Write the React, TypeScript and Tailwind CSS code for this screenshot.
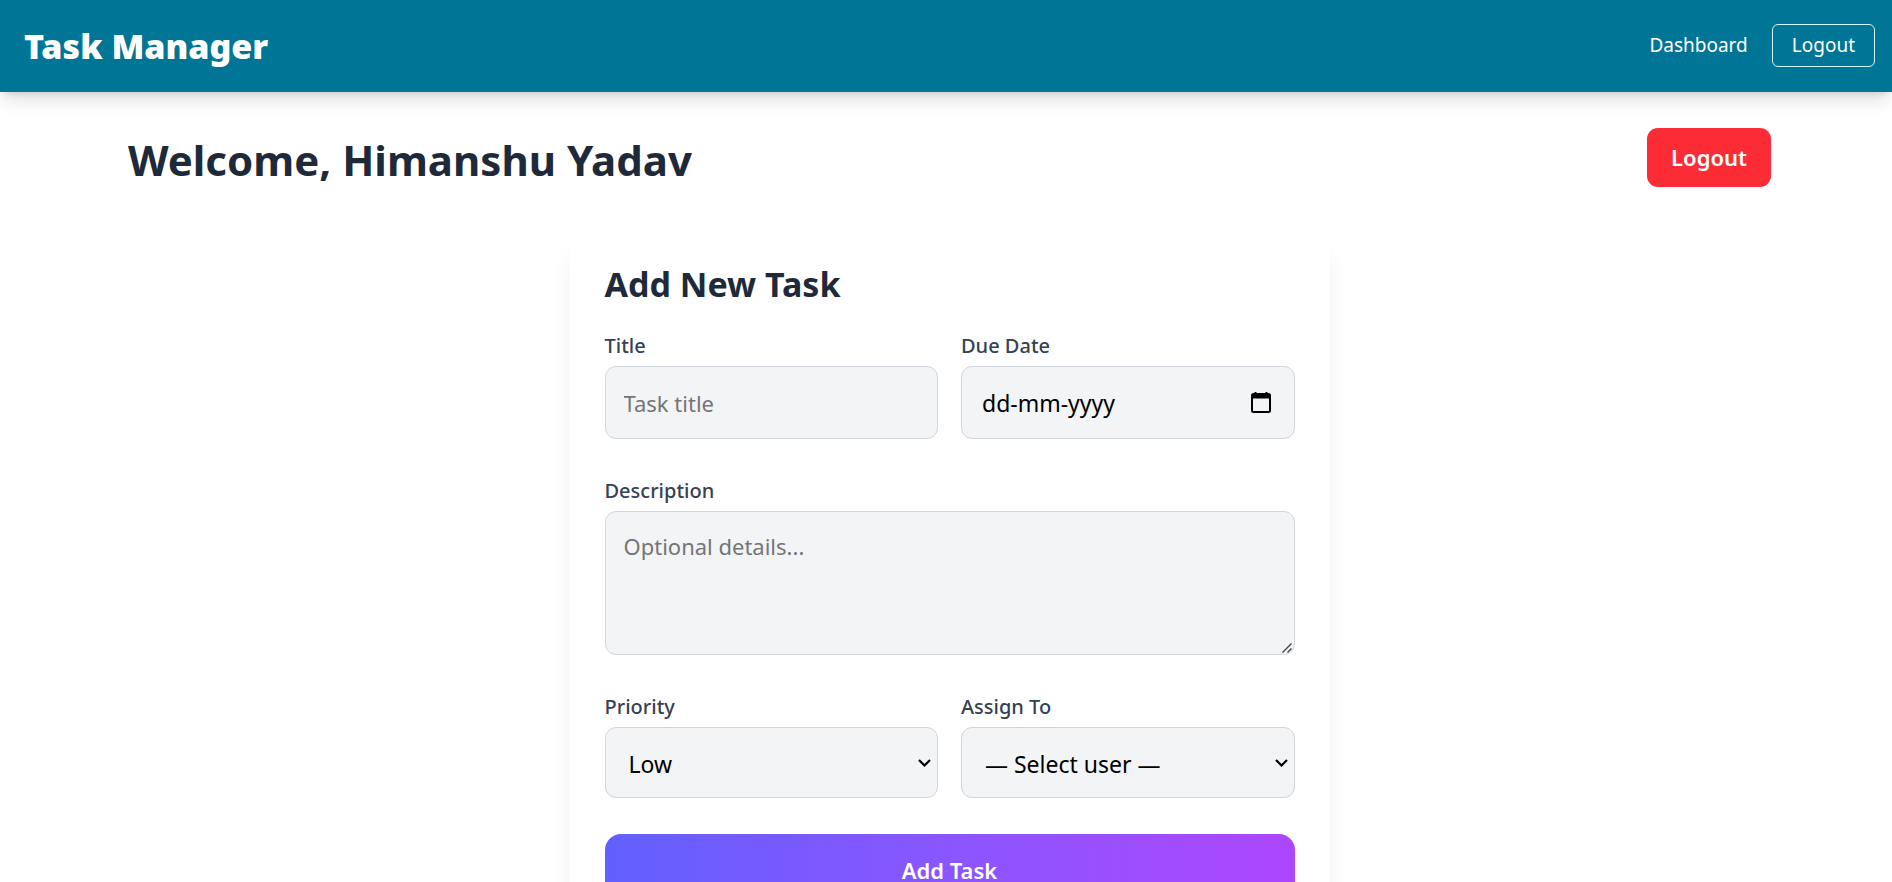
import type { ReactNode } from "react";

const fieldClass =
  "block w-full rounded-[11px] border border-gray-300 bg-gray-100 leading-[33px] text-black";

function Field({ id, label, children }: { id: string; label: string; children: ReactNode }) {
  return (
    <div>
      <label htmlFor={id} className="mb-[5px] block text-[20px] leading-[31px] font-medium text-gray-700">
        {label}
      </label>
      <div className="relative">{children}</div>
    </div>
  );
}

function Select({ id, options }: { id: string; options: string[] }) {
  return (
    <>
      <select id={id} className={`${fieldClass} appearance-none pt-5 pr-8 pb-4 pl-[23px] text-[23px]`}>
        {options.map((option) => (
          <option key={option}>{option}</option>
        ))}
      </select>
      <svg
        className="pointer-events-none absolute top-8 right-[7px]"
        width="13"
        height="8"
        viewBox="0 0 13 8"
        fill="none"
        stroke="black"
        strokeWidth="2.2"
      >
        <path d="M1 1l5.500 5.500L12 1" />
      </svg>
    </>
  );
}

function Navbar() {
  return (
    <header className="relative flex items-center justify-between bg-[#007595] py-[23px] pr-[17px] pl-6 text-white shadow-[0_11px_17px_-3px_rgba(0,0,0,0.12),0_5px_7px_-4px_rgba(0,0,0,0.12)]">
      <a href="#home" className="text-[34px] leading-[46px] font-black">
        Task Manager
      </a>
      <nav className="flex items-center gap-6 pb-[2px] text-[19px]">
        <a href="#dashboard">Dashboard</a>
        <button type="button" className="rounded-md border border-cyan-100 px-[19px] leading-[41px]">
          Logout
        </button>
      </nav>
    </header>
  );
}

function TaskForm() {
  return (
    <form className="mx-auto max-w-[760px] rounded-[18px] bg-white px-[35px] pt-[34px] pb-9 shadow-[0_22px_28px_-6px_rgba(0,0,0,0.09),0_9px_11px_-7px_rgba(0,0,0,0.09)]">
      <h2 className="mb-[23px] text-[34px] leading-[45px] font-bold text-gray-800">Add New Task</h2>
      <div className="grid gap-9">
        <div className="grid grid-cols-2 gap-[23px]">
          <Field id="title" label="Title">
            <input
              id="title"
              type="text"
              placeholder="Task title"
              className={`${fieldClass} pt-5 pr-[18px] pb-[18px] pl-[18px] text-[22px] placeholder:text-[#757575]`}
            />
          </Field>
          <Field id="due" label="Due Date">
            <input
              id="due"
              type="text"
              placeholder="dd-mm-yyyy"
              className={`${fieldClass} pt-5 pr-12 pb-[18px] pl-5 text-[23px] placeholder:text-black`}
            />
            <button type="button" aria-label="Pick a date" className="absolute top-[26px] right-6">
              <svg className="block" width="20" height="21" viewBox="0 0 20 21" fill="none">
                <path d="M1 3.500Q1 2 2.500 2h15Q19 2 19 3.500V18.500Q19 20 17.500 20h-15Q1 20 1 18.500Z" stroke="black" strokeWidth="2" />
                <path d="M1 2h18v4.500H1zM3.500 0h2v3h-2zM14.500 0h2v3h-2z" fill="black" />
              </svg>
            </button>
          </Field>
        </div>
        <Field id="description" label="Description">
          <textarea
            id="description"
            placeholder="Optional details..."
            className={`${fieldClass} h-36 resize-y px-[18px] py-[18px] text-[22px] placeholder:text-[#757575] [&::-webkit-resizer]:bg-transparent`}
          />
          <svg
            className="pointer-events-none absolute right-[3px] bottom-[2px]"
            width="10"
            height="10"
            viewBox="0 0 10 10"
            fill="none"
            stroke="#444"
            strokeWidth="1.400"
          >
            <path d="M0.500 9.500l9-9M5.500 9.500l4-4" />
          </svg>
        </Field>
        <div className="grid grid-cols-2 gap-[23px]">
          <Field id="priority" label="Priority">
            <Select id="priority" options={["Low", "Medium", "High"]} />
          </Field>
          <Field id="assignee" label="Assign To">
            <Select id="assignee" options={["— Select user —"]} />
          </Field>
        </div>
        <button
          type="submit"
          className="rounded-2xl bg-linear-to-r from-[#615fff] to-[#ad46ff] py-[25px] text-[22px] leading-[22px] font-semibold text-white"
        >
          Add Task
        </button>
      </div>
    </form>
  );
}

export default function App() {
  return (
    <div className="h-screen overflow-hidden bg-white font-['Noto_Sans',sans-serif]">
      <Navbar />
      <main className="pl-[7px]">
        <div className="mx-auto max-w-[1643px] pt-9">
          <div className="mb-[41px] flex items-center justify-between">
            <h1 className="pt-1 text-[42px] leading-[55px] font-bold text-gray-800">Welcome, Himanshu Yadav</h1>
            <button type="button" className="rounded-[11px] bg-[#fb2c36] px-6 py-[11px] text-[22px] leading-[37px] font-semibold text-white">
              Logout
            </button>
          </div>
          <TaskForm />
        </div>
      </main>
    </div>
  );
}
